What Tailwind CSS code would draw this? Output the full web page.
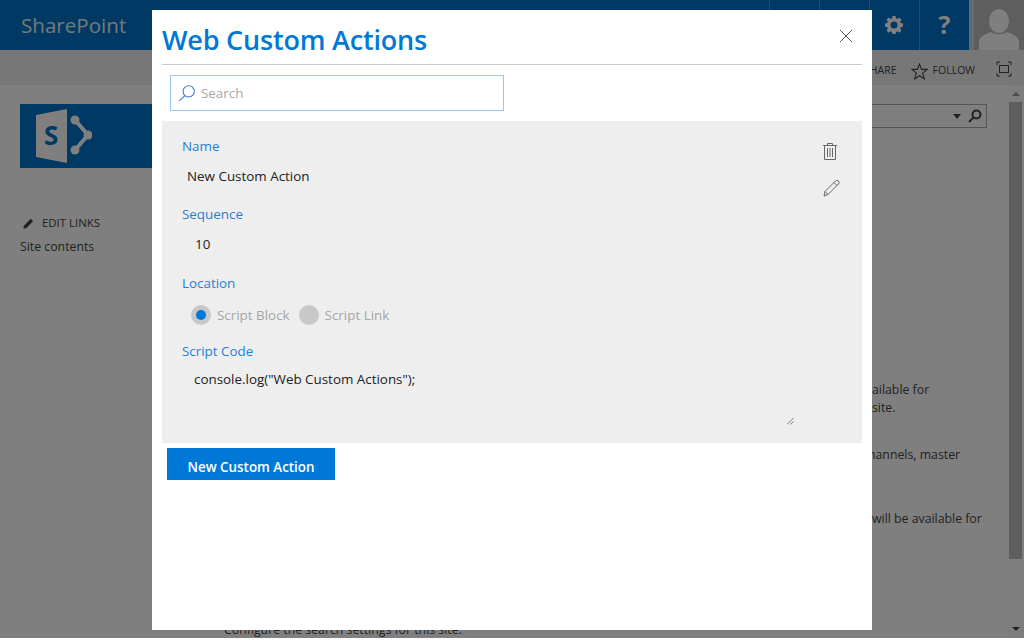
<!DOCTYPE html>
<html lang="en">
<head>
    <meta charset="UTF-8">
    <title>Web Custom Actions</title>
    <script src="https://cdn.jsdelivr.net/npm/@tailwindcss/browser@4"></script>
</head>
<body class="relative w-[1024px] h-[640px] overflow-hidden bg-white font-['Open_Sans',sans-serif] text-[#444]">

    <!-- SharePoint page behind the dialog -->
    <div class="flex flex-col h-[640px]">
        <header class="flex h-[50px] bg-[#0072c6] text-white">
            <div class="flex-1 pl-[21px] pt-[11px] text-[20.6px] leading-[28px] text-white/90">SharePoint</div>
            <div class="w-[50px] border-l border-white/30"></div>
            <div class="w-[50px] border-l border-white/30"></div>
            <div class="w-[50px] border-l border-white/30 flex items-center justify-center pr-[2px]">
                <svg width="18" height="18" viewBox="0 0 18 18" fill="#fff"><path fill-rule="evenodd" d="M7.4 0h3.2l.4 2.3 1.3.6 2-1.3 2.2 2.2-1.3 2 .5 1.3 2.3.4v3.2l-2.3.5-.5 1.2 1.3 2-2.2 2.3-2-1.4-1.3.6-.4 2.3H7.4l-.4-2.3-1.3-.6-2 1.4-2.2-2.3 1.3-2-.5-1.2-2.3-.5V7.500l2.300-.4.500-1.300-1.300-2L3.700 1.600l2 1.300L7 2.300zM9 5.500a3.500 3.500 0 1 0 0 7 3.500 3.500 0 0 0 0-7z"/></svg>
            </div>
            <div class="w-[50px] border-l border-white/30 flex items-center justify-center text-[25px] font-bold">?</div>
            <div class="w-[5px] bg-[#c8d4dd]"></div>
            <div class="w-[50px] bg-[#bcbcbc] overflow-hidden">
                <svg width="50" height="50" viewBox="0 0 50 50" fill="#fff"><ellipse cx="25" cy="21" rx="10" ry="12"/><path d="M5 50V42c0-5 6-8 12-10 3 3 13 3 16 0 6 2 12 5 12 10v8z"/></svg>
            </div>
        </header>
        <div class="flex justify-end items-center h-[35px] bg-[#eeeeee] text-[10.5px] pt-[7px] pr-[12px]">
            <span class="mr-[14px]">SHARE</span>
            <span class="flex items-center gap-[5px] mr-[21px]">
                <svg width="17" height="17" viewBox="0 0 16 16" fill="none" stroke="#444"><path d="M8 1l2 5h5l-4 3.500 1.500 5.500L8 12l-4.500 3L5 9.500 1 6h5z"/></svg>
                FOLLOW
            </span>
            <svg class="mb-[4px]" width="16" height="16" viewBox="0 0 16 16" fill="none" stroke="#444"><path d="M1 4V1h3M12 1h3v3M15 12v3h-3M4 15H1v-3"/><rect x="3.500" y="4.500" width="9" height="7"/></svg>
        </div>
        <div class="flex flex-1 bg-white">
            <aside class="w-[204px] pl-[20px] pt-[19px]">
                <div class="flex items-center w-[140px] h-[64px] pl-[16px] bg-[#0072c6]">
                    <svg width="56" height="56" viewBox="0 0 56 56" fill="#fff">
                        <path d="M0 7L31 1v54L0 49z"/>
                        <circle cx="39" cy="12" r="4.500"/><circle cx="52" cy="27" r="4.500"/><circle cx="39" cy="42" r="4.500"/>
                        <path d="M39 12l13 15-13 15" fill="none" stroke="#fff" stroke-width="4"/>
                        <text x="8" y="37" font-size="26" font-weight="700" fill="#0072c6" font-family="Open Sans">S</text>
                    </svg>
                </div>
                <div class="flex items-center gap-[7px] mt-[47px] pl-[2px] text-[11.4px] leading-[16px]">
                    <svg width="13" height="13" viewBox="0 0 14 14" fill="#444"><path d="M2 9.500L9.500 2 12 4.500 4.500 12 1.500 12.500z"/></svg>
                    EDIT LINKS
                </div>
                <div class="mt-[7px] text-[12.3px] leading-[18px]">Site contents</div>
            </aside>
            <main class="relative flex-1 text-[12.3px]">
                <div class="absolute right-[21px] top-[19px] flex justify-end items-center gap-[6px] w-[200px] h-[24px] border border-[#aaa] pr-[3px]">
                    <span class="w-0 h-0 border-x-[4px] border-t-[5px] border-x-transparent border-t-[#444]"></span>
                    <svg width="16" height="16" viewBox="0 0 16 16" fill="none" stroke="#444" stroke-width="2"><circle cx="9.500" cy="6.500" r="4"/><path d="M6.500 9.500L2 14"/></svg>
                </div>
                <div class="absolute left-[668px] top-[296px] w-[140px] leading-[18px]">ailable for<br>site.</div>
                <div class="absolute left-[664px] top-[361px] w-[140px] leading-[18px]">hannels, master</div>
                <div class="absolute left-[668px] top-[425px] w-[140px] leading-[18px]">will be available for</div>
                <div class="absolute left-[20px] top-[536px] leading-[18px] whitespace-nowrap">Configure the search settings for this site.</div>
            </main>
            <div class="relative w-[16px] bg-[#fdfdfd]">
                <span class="absolute left-[4px] top-[7px] w-0 h-0 border-x-[4px] border-b-[4px] border-x-transparent border-b-[#999]"></span>
                <div class="absolute left-[1px] right-[2px] top-[17px] h-[457px] bg-[#bdbdbd]"></div>
                <span class="absolute left-[4px] top-[542px] w-0 h-0 border-x-[4px] border-t-[4px] border-x-transparent border-t-[#444]"></span>
            </div>
        </div>
    </div>

    <!-- overlay -->
    <div class="absolute inset-x-0 top-0 h-[638px] bg-black/50"></div>

    <!-- dialog -->
    <div class="absolute left-[152px] top-[10px] w-[720px] h-[620px] bg-white px-[10px]">
        <div class="relative h-[55px] border-b border-[#c8c8c8]">
            <h1 class="pt-[11px] text-[27px] leading-[38px] font-semibold text-[#0078d7] tracking-[-0.2px]">Web Custom Actions</h1>
            <svg class="absolute right-[9px] top-[19px]" width="14" height="14" viewBox="0 0 14 14" fill="none" stroke="#555"><path d="M1 1l12 12M13 1L1 13"/></svg>
        </div>
        <div class="flex items-center gap-[5px] w-[334px] h-[36px] mt-[10px] ml-[8px] pl-[7px] border border-[#9cc5ee] text-[13.4px] text-[#a6a6a6]">
            <svg width="18" height="18" viewBox="0 0 16 16" fill="none" stroke="#3b7fd4"><circle cx="9.500" cy="6.500" r="5"/><path d="M6 10.500L1 15"/></svg>
            <span class="pt-px">Search</span>
        </div>
        <section class="relative h-[322px] mt-[10px] bg-[#eeeeee] pl-[20px] pt-[15px] text-[13.4px]">
            <div class="leading-[20px] text-[#1f7fd6]">Name</div>
            <div class="mt-[10px] ml-[5px] leading-[20px] text-[#222]">New Custom Action</div>
            <div class="mt-[18px] leading-[20px] text-[#1f7fd6]">Sequence</div>
            <div class="mt-[10px] ml-[13px] leading-[20px] text-[#222]">10</div>
            <div class="mt-[19px] leading-[20px] text-[#1f7fd6]">Location</div>
            <div class="flex items-center mt-[11px] ml-[9px] h-[22px] text-[#a6a6a6]">
                <span class="flex items-center justify-center w-[20px] h-[20px] rounded-full bg-[#c8c8c8]"><span class="w-[10px] h-[10px] rounded-full bg-[#0078d7]"></span></span>
                <span class="ml-[6px]">Script Block</span>
                <span class="ml-[9px] w-[20px] h-[20px] rounded-full bg-[#c8c8c8]"></span>
                <span class="ml-[6px]">Script Link</span>
            </div>
            <div class="mt-[15px] leading-[20px] text-[#1f7fd6]">Script Code</div>
            <div class="mt-[8px] ml-[12px] leading-[20px] text-[#222]">console.log("Web Custom Actions");</div>

            <svg class="absolute left-[661px] top-[22px]" width="14" height="17" viewBox="0 0 14 17" fill="none" stroke="#666"><path d="M0 2.500h14M4.500 2.500V.5h5v2M1.500 2.500v14h11v-14M4.500 5v9M7 5v9M9.500 5v9"/></svg>
            <svg class="absolute left-[661px] top-[59px]" width="17" height="17" viewBox="0 0 17 17" fill="none" stroke="#666"><path d="M1 16l1-4.500L12.500 1a1.500 1.500 0 0 1 3 3L5 14.500zM2 11.500L5 14.500M11 2.500l3 3"/></svg>
            <svg class="absolute left-[625px] top-[297px]" width="7" height="7" viewBox="0 0 7 7" stroke="#777"><path d="M0 6.500L6.500 0M3.500 6.500L6.500 3.500"/></svg>
        </section>
        <button class="block w-[168px] h-[32px] mt-[5px] ml-[5px] pt-[6px] bg-[#0078d7] text-white text-[13.4px] font-semibold">New Custom Action</button>
    </div>

</body>
</html>
